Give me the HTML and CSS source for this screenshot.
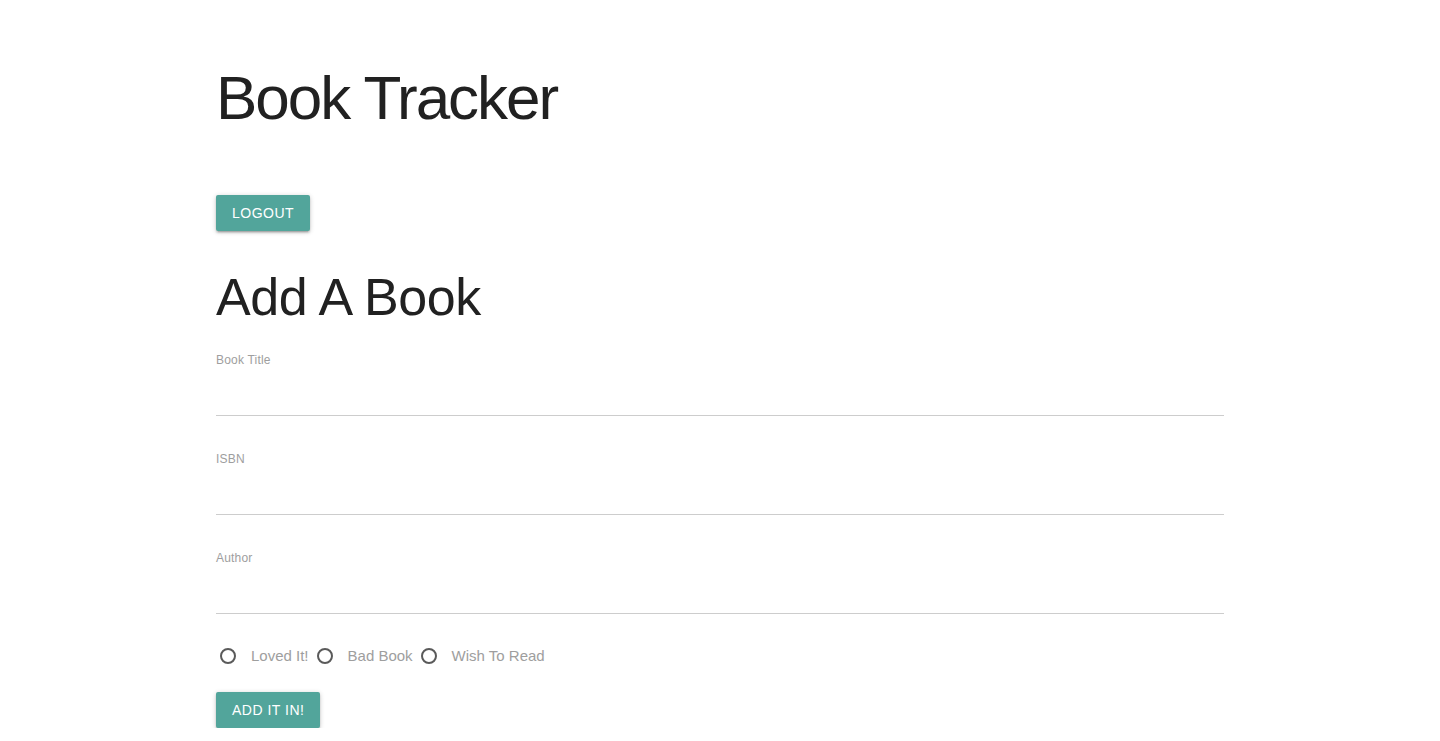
FILE: index.html
```html
<!DOCTYPE html>
<html lang="en">
<head>
<meta charset="utf-8">
<title>Book Tracker</title>
<link rel="stylesheet" href="styles.css">
</head>
<body>
<div class="container">
  <h1 class="title">Book Tracker</h1>
  <button class="btn btn-logout" type="button">Logout</button>
  <h2 class="subtitle">Add A Book</h2>
  <form class="book-form">
    <div class="input-field">
      <label class="field-label" for="title">Book Title</label>
      <input class="field-input" id="title" type="text">
    </div>
    <div class="input-field">
      <label class="field-label" for="isbn">ISBN</label>
      <input class="field-input" id="isbn" type="text">
    </div>
    <div class="input-field">
      <label class="field-label" for="author">Author</label>
      <input class="field-input" id="author" type="text">
    </div>
    <div class="radios">
      <label class="radio"><span class="circle"></span><span class="radio-text">Loved It!</span></label>
      <label class="radio"><span class="circle"></span><span class="radio-text">Bad Book</span></label>
      <label class="radio"><span class="circle"></span><span class="radio-text">Wish To Read</span></label>
    </div>
    <button class="btn btn-add" type="button">Add It In!</button>
  </form>
</div>
</body>
</html>
```
FILE: styles.css
```css
html { font-size: 15px; }
body {
  margin: 0;
  background: #fff;
  color: #212121;
  font-family: "Liberation Sans", Arial, sans-serif;
}
.container {
  width: 70%;
  margin: 0 auto;
}
.title {
  font-size: 62px;
  font-weight: 400;
  letter-spacing: -2px;
  line-height: 1.1;
  margin: 0;
  padding-top: 64px;
  color: #212121;
}
.btn {
  display: block;
  height: 36px;
  padding: 0 16px;
  border: none;
  border-radius: 2px;
  background: #52a59b;
  color: #fff;
  font-family: inherit;
  font-size: 14px;
  font-weight: 400;
  letter-spacing: .5px;
  text-transform: uppercase;
  line-height: 36px;
  box-shadow: 0 2px 2px 0 rgba(0,0,0,0.14), 0 3px 1px -2px rgba(0,0,0,0.12), 0 1px 5px 0 rgba(0,0,0,0.2);
  cursor: pointer;
}
.btn-logout { margin-top: 63px; }
.subtitle {
  font-size: 52px;
  font-weight: 400;
  letter-spacing: -0.4px;
  line-height: 1.1;
  margin: 38px 0 0;
  color: #212121;
}
.book-form { display: flex; flex-direction: column; align-items: flex-start; }
.input-field {
  align-self: stretch;
  display: flex;
  flex-direction: column;
  margin-top: 27px;
}
.input-field + .input-field { margin-top: 36px; }
.field-label {
  font-size: 12px;
  line-height: 14px;
  letter-spacing: .2px;
  color: #9e9e9e;
}
.field-input {
  height: 48px;
  margin: 0;
  padding: 0;
  border: none;
  border-bottom: 1px solid #cdcdcd;
  outline: none;
  background: transparent;
  font: inherit;
}
.radios {
  display: flex;
  gap: 4px;
  margin-top: 29px;
}
.radio {
  display: flex;
  align-items: center;
  height: 25px;
  font-size: 15px;
  color: #9e9e9e;
}
.circle {
  width: 12px;
  height: 12px;
  margin: 0 15px 0 4px;
  border: 2px solid #5a5a5a;
  border-radius: 50%;
}
.btn-add { margin-top: 24px; }
```
